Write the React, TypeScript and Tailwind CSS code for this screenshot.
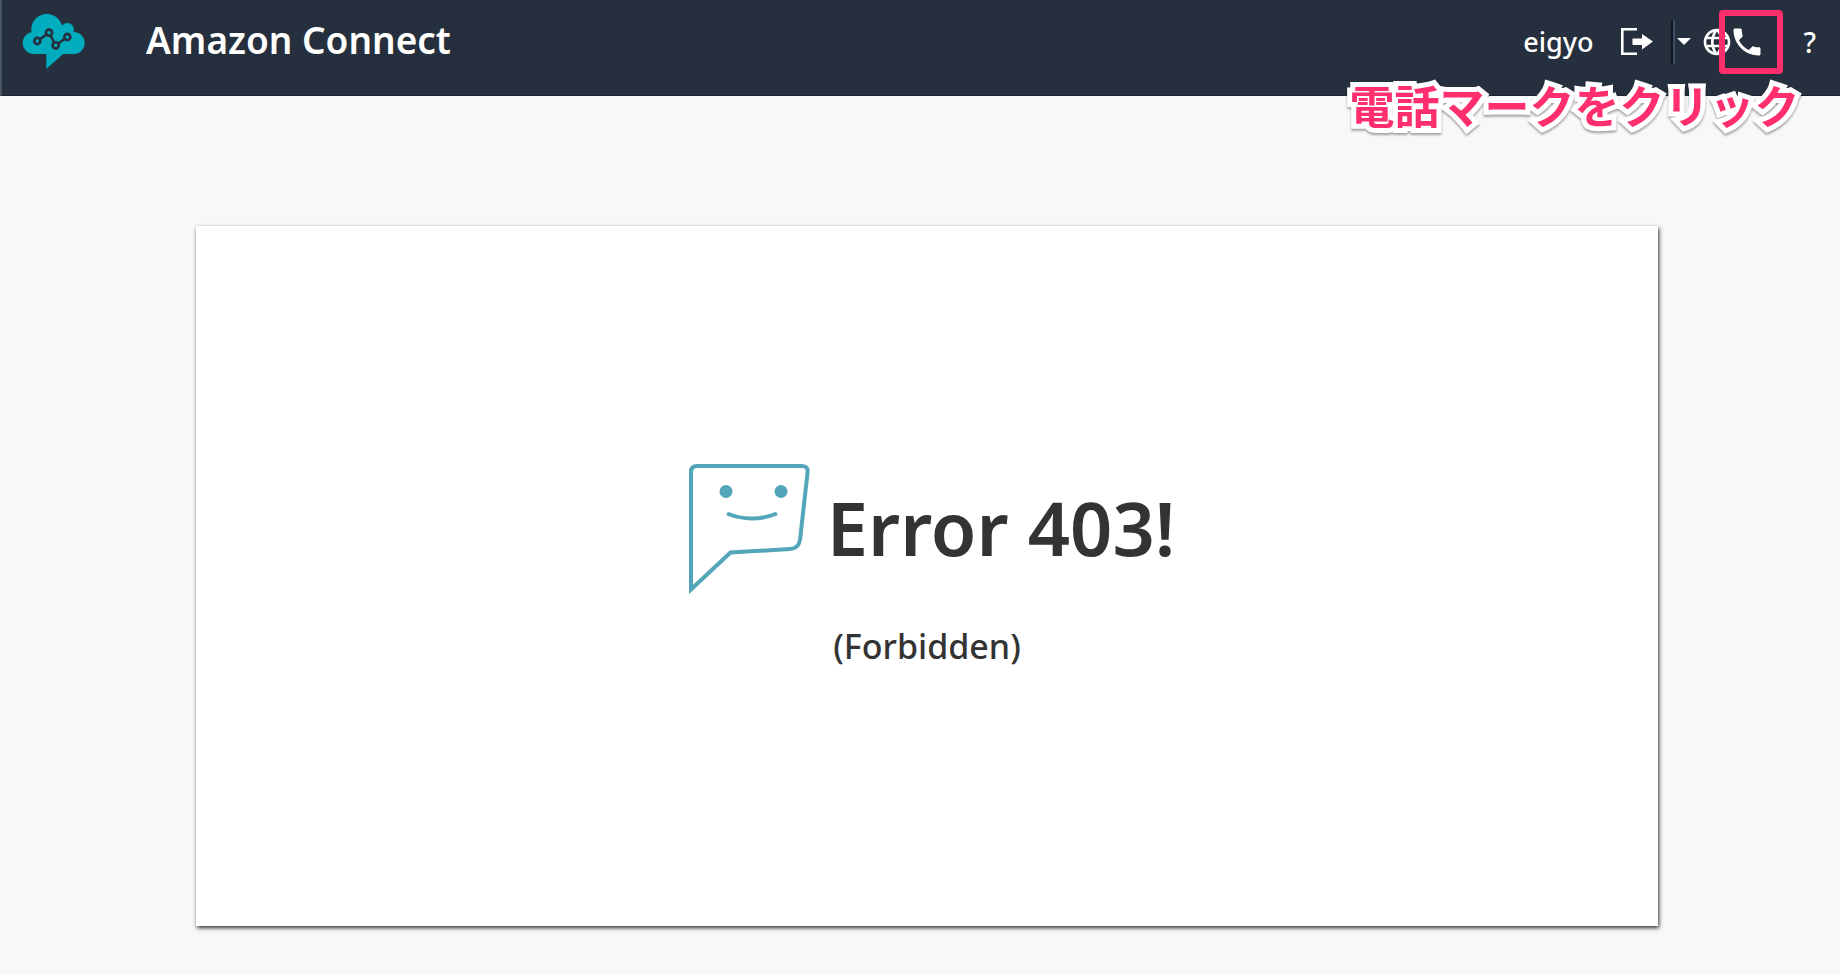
import React from "react";
import { MdLanguage, MdPhone } from "react-icons/md";

function ConnectLogo() {
  return (
    <svg className="h-14 w-16" viewBox="0 0 64 56" aria-hidden="true">
      <g fill="#00acbe">
        <circle cx="11.700" cy="29" r="11" />
        <circle cx="24.800" cy="15.500" r="15.500" />
        <circle cx="45.300" cy="15.700" r="6.700" />
        <circle cx="51.700" cy="29" r="11" />
        <path d="M11.700 40V18H40V15H50V18H51.700V40H41L24.300 55V40Z" />
      </g>
      <g fill="none" stroke="#252f3d" strokeWidth="2.600">
        <circle cx="15.300" cy="27" r="3.100" />
        <circle cx="27" cy="18.700" r="3.100" />
        <circle cx="33.700" cy="31.300" r="3.100" />
        <circle cx="45.300" cy="23" r="3.100" />
        <path d="M17.900 25.200L24.400 20.500M28.500 21.500L32.200 28.500M36.300 29.500L42.700 24.800" />
      </g>
    </svg>
  );
}

function SignOutIcon() {
  return (
    <svg className="h-8 w-8" viewBox="0 0 32 32" aria-hidden="true">
      <path fill="none" stroke="#fff" strokeWidth="2.600" d="M16 3.300H1.300V27.700H16" />
      <path fill="#fff" d="M11.500 12.500H21V8L32 15.500L21 23.500V19H11.500Z" />
    </svg>
  );
}

function ErrorFace() {
  return (
    <svg className="h-[132px] w-[124px]" viewBox="0 0 124 132" fill="none" stroke="#53a5ba" strokeWidth="4" aria-hidden="true">
      <path d="M4 127.500V10Q4 4 10 4H115Q121.500 4 120.500 11L113 78Q111.500 86.500 103 87L43.500 90.500Z" />
      <path d="M40 51.500Q65 61.500 90 51.500" />
      <circle cx="39" cy="29.500" r="6.500" fill="#53a5ba" stroke="none" />
      <circle cx="94" cy="29.500" r="6.500" fill="#53a5ba" stroke="none" />
    </svg>
  );
}

export default function App() {
  return (
    <div className="flex min-h-screen flex-col bg-[#f8f8f8] font-['Noto_Sans','Noto_Sans_CJK_JP',sans-serif] text-[#333]">
      <header className="flex h-24 items-start border-b border-l-2 border-b-[#1b2430] border-l-[#4a5562] bg-[#252f3d] pl-5 text-white">
        <a href="#home" aria-label="Home" className="mt-3.5">
          <ConnectLogo />
        </a>
        <h1 className="ml-[60px] mt-3.5 text-[37px] leading-[52px] font-semibold">Amazon Connect</h1>
        <div className="ml-auto flex h-[84px] items-center pr-6">
          <span className="text-[27px] leading-9 font-medium">eigyo</span>
          <button type="button" aria-label="Sign out" className="ml-7">
            <SignOutIcon />
          </button>
          <span className="ml-4.5 h-11 w-1 border-r-2 border-l-2 border-r-[#3d4f66] border-l-[#12171e]" />
          <button type="button" aria-label="Language" className="ml-0.5 flex items-center gap-2.5">
            <svg className="h-2 w-3.5" viewBox="0 0 14 8" aria-hidden="true">
              <path fill="#fff" d="M0 0H14L7 7Z" />
            </svg>
            <MdLanguage className="size-8" />
          </button>
          <div className="relative -ml-1">
            <button type="button" aria-label="Phone" className="block">
              <MdPhone className="size-9" />
            </button>
            <div className="pointer-events-none absolute -top-3.5 -left-2.5 size-16 rounded-sm border-6 border-[#ff2e6d]" />
            <p className="pointer-events-none absolute top-13 -right-8.5 text-[45px] leading-[62px] font-bold whitespace-nowrap text-[#ff2e6d] [-webkit-text-stroke:10px_#fff] [paint-order:stroke_fill] [filter:drop-shadow(0_2px_1px_rgb(0_0_0/0.35))]">
              電話マークをクリック
            </p>
          </div>
          <a href="#help" className="ml-9.5 text-[28px] leading-9 font-medium">
            ?
          </a>
        </div>
      </header>
      <main className="pt-[130px] pr-[182px] pb-12 pl-[196px]">
        <section className="flex h-[700px] flex-col items-center bg-white pt-[236px] shadow-[1px_2px_4px_rgb(0_0_0/0.8)]">
          <div className="flex items-start gap-4 pl-2">
            <ErrorFace />
            <h2 className="text-[74px] leading-[132px] font-semibold">Error 403!</h2>
          </div>
          <p className="mt-7 text-[34px] leading-12 font-medium">(Forbidden)</p>
        </section>
      </main>
    </div>
  );
}
